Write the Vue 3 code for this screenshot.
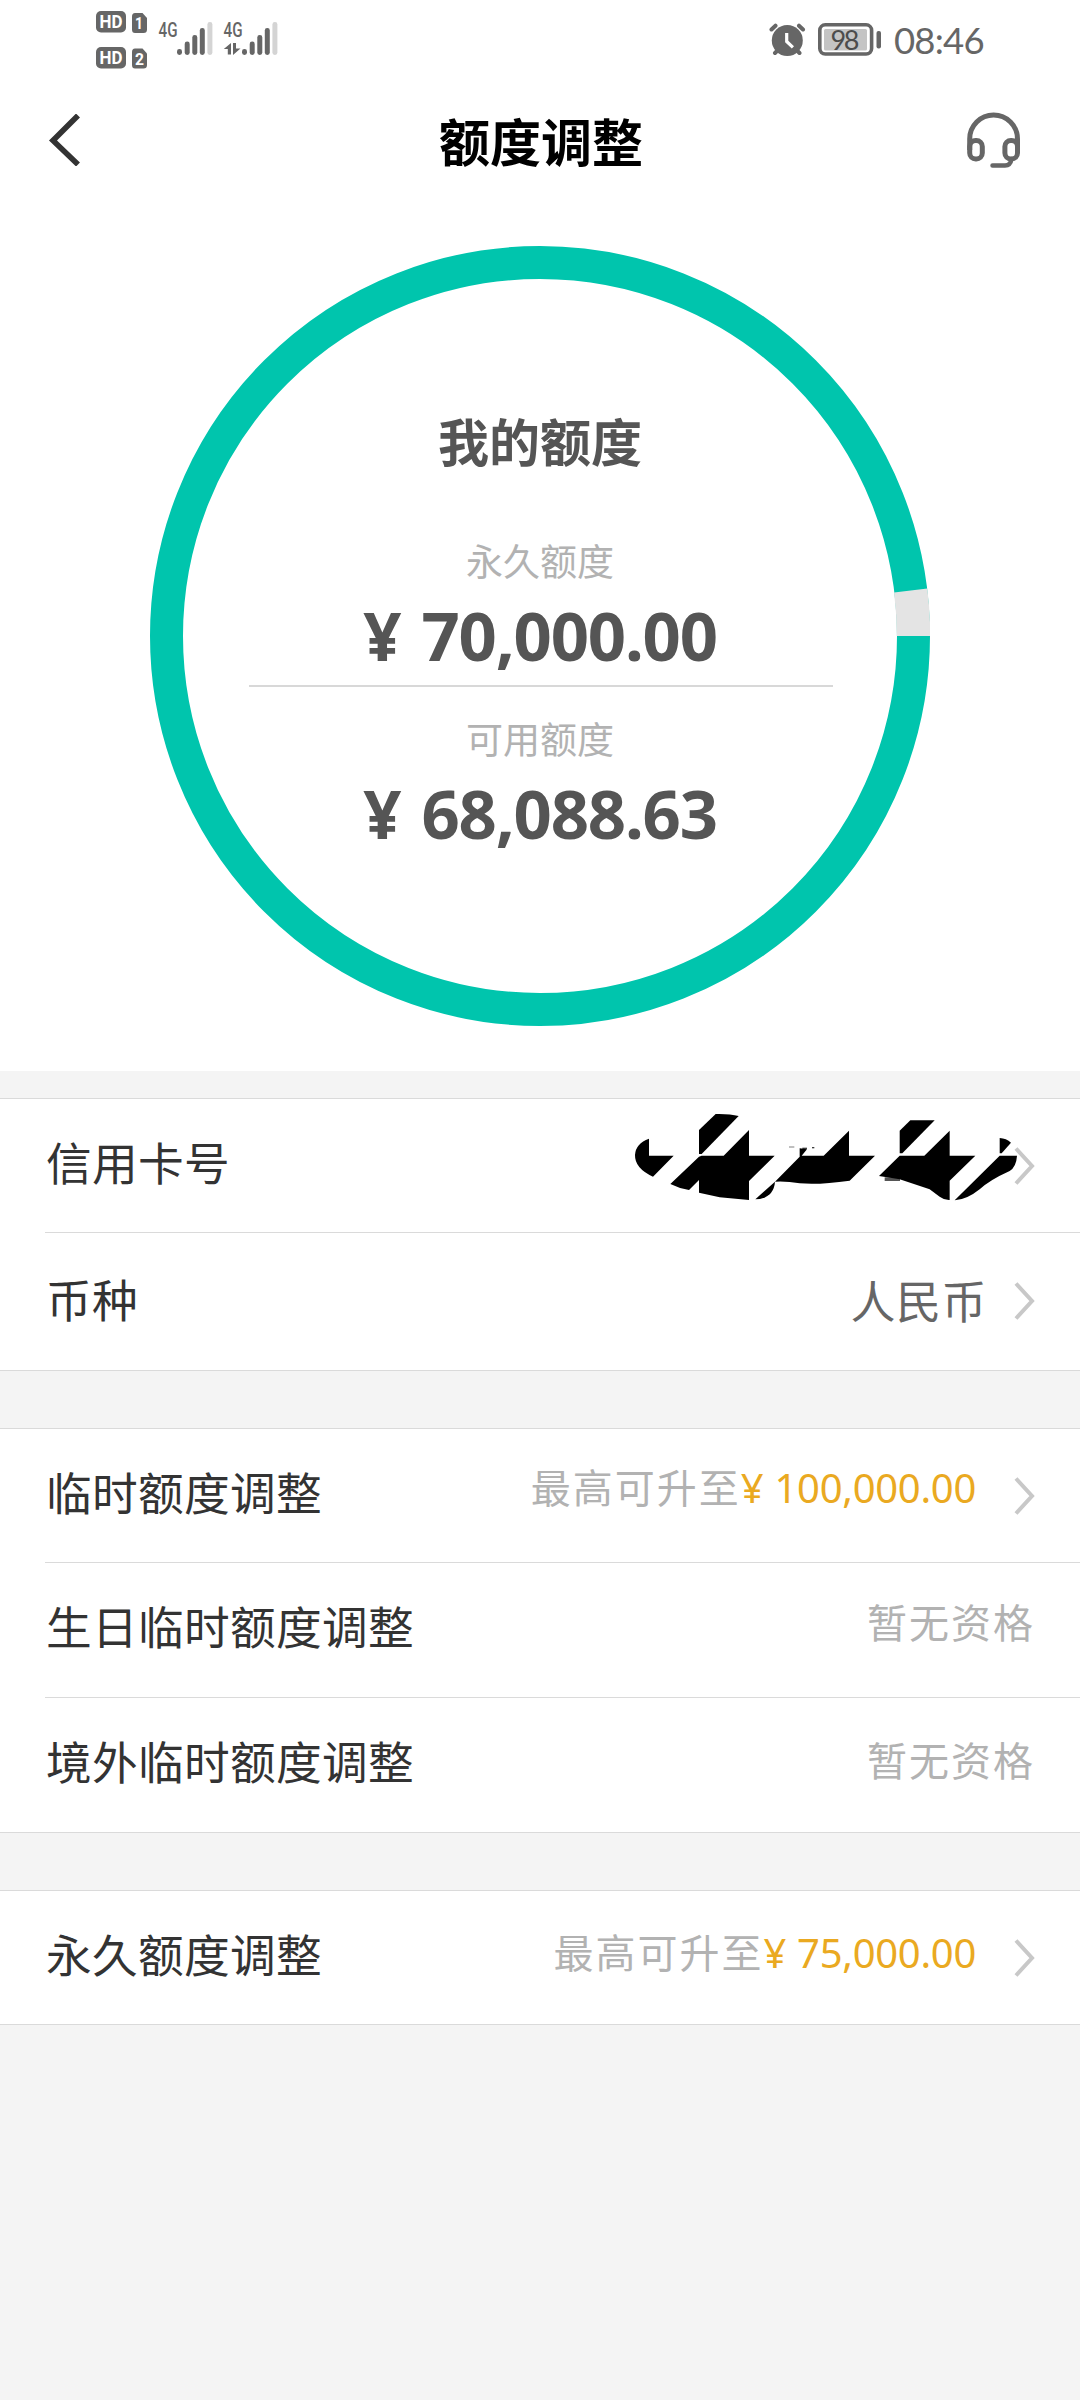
<script setup>
const groups = [
  {
    id: 'card',
    rows: [
      { label: '信用卡号', kind: 'masked', arrow: true },
      { label: '币种', kind: 'plain', value: '人民币', arrow: true },
    ],
  },
  {
    id: 'temporary',
    rows: [
      { label: '临时额度调整', kind: 'limit', value: '最高可升至', amount: '¥ 100,000.00', arrow: true },
      { label: '生日临时额度调整', kind: 'muted', value: '暂无资格' },
      { label: '境外临时额度调整', kind: 'muted', value: '暂无资格' },
    ],
  },
  {
    id: 'permanent',
    rows: [
      { label: '永久额度调整', kind: 'limit', value: '最高可升至', amount: '¥ 75,000.00', arrow: true },
    ],
  },
]

const radius = 373.5
const circumference = 2 * Math.PI * radius
const usedDegrees = 7
const usedLength = (circumference * usedDegrees) / 360
</script>

<template>
  <main class="screen">
    <div class="status">
      <svg class="status-left" width="200" height="80" viewBox="80 0 200 80">
        <g fill="#666">
          <rect x="96" y="11" width="30" height="21.5" rx="5" />
          <rect x="96" y="47" width="30" height="21.5" rx="5" />
          <path d="M135 13h7.5l4.5 5v11.5q0 3.5-3.5 3.5h-8.5q-3 0-3-3.5v-13q0-3.5 3-3.5z" />
          <path d="M135 48.5h7.5l4.5 5v11.5q0 3.5-3.5 3.5h-8.5q-3 0-3-3.5v-13q0-3.500 3-3.5z" />
        </g>
        <g class="badge-text" fill="#fff">
          <text x="99.5" y="28" textLength="23" lengthAdjust="spacingAndGlyphs">HD</text>
          <text x="99.5" y="64" textLength="23" lengthAdjust="spacingAndGlyphs">HD</text>
          <text class="sim" x="135" y="29" textLength="8" lengthAdjust="spacingAndGlyphs">1</text>
          <text class="sim" x="135" y="64.5" textLength="9" lengthAdjust="spacingAndGlyphs">2</text>
        </g>
        <g class="net-text" fill="#666">
          <text x="158.5" y="37" textLength="19" lengthAdjust="spacingAndGlyphs">4G</text>
          <text x="223.5" y="37" textLength="19" lengthAdjust="spacingAndGlyphs">4G</text>
        </g>
        <g v-for="dx in [0, 65]" :key="dx" :transform="`translate(${dx} 0)`" fill="#666">
          <rect x="177" y="49" width="5" height="6" rx="2.4" />
          <rect x="184.7" y="41.5" width="5" height="13.5" rx="2.4" />
          <rect x="192.3" y="35" width="5" height="20" rx="2.4" />
          <rect x="199.8" y="28" width="5" height="27" rx="2.4" />
          <rect x="207.4" y="22" width="5" height="33" rx="2.4" fill="#d4d4d4" />
        </g>
        <path d="M231 43v11.5h-3.2v-5.5h-4zM233 43h3v5.5h4.5l-7.5 6.5z" fill="#666" />
      </svg>
      <div class="status-right">
        <svg width="37" height="36" viewBox="769 22 37 36">
          <path d="M771.5 29.5l4-3.8M803 29.500l-4-3.8M775 53l4-4M799.5 53l-4-4" stroke="#666" stroke-width="4" stroke-linecap="round" fill="none" />
          <circle cx="787.3" cy="40.5" r="15.5" fill="#666" />
          <path d="M786.7 33v8.5l6.2 5.8" fill="none" stroke="#fff" stroke-width="3.2" />
        </svg>
        <svg width="64" height="36" viewBox="818 22 64 36">
          <rect x="819.8" y="24.8" width="51.8" height="29.2" rx="5.5" fill="#fff" stroke="#666" stroke-width="3.6" />
          <rect x="824" y="29" width="43" height="21.5" rx="1.5" fill="#c4c4c4" />
          <rect x="876.5" y="31" width="4.5" height="17.5" rx="2" fill="#666" />
          <text class="battery-text" x="830.5" y="49.5" textLength="29" fill="#4c4c4c">98</text>
        </svg>
        <span class="time">08:46</span>
      </div>
    </div>

    <header class="nav">
      <svg width="34" height="52" viewBox="0 0 34 52">
        <path d="M31 1.5L6 26.5L31 50.5" fill="none" stroke="#333" stroke-width="5.6" />
      </svg>
      <h1>额度调整</h1>
      <svg width="56" height="58" viewBox="965 111 56 58">
        <g fill="none" stroke="#666" stroke-width="5">
          <path d="M969.7 150V139a23.9 23.9 0 0 1 47.8 0v11" />
          <rect x="969.7" y="140.5" width="12.6" height="18.5" rx="6" />
          <rect x="1004.9" y="140.5" width="12.6" height="18.5" rx="6" />
          <path d="M1011.5 159q-1 6.5-6.5 6.5H992.5" stroke-width="4.5" stroke-linecap="round" />
        </g>
      </svg>
    </header>

    <section class="gauge">
      <svg class="ring" width="780" height="780" viewBox="0 0 780 780">
        <circle cx="390" cy="390" :r="radius" fill="none" stroke="#00c5ad" stroke-width="33" />
        <circle
          cx="390" cy="390" :r="radius" fill="none" stroke="#e4e4e4" stroke-width="33.5"
          :stroke-dasharray="`${usedLength} ${circumference - usedLength}`"
          :transform="`rotate(${-usedDegrees} 390 390)`"
        />
      </svg>
      <div class="summary">
        <h2>我的额度</h2>
        <p class="caption">永久额度</p>
        <p class="amount">¥ 70,000.00</p>
        <hr />
        <p class="caption">可用额度</p>
        <p class="amount">¥ 68,088.63</p>
      </div>
    </section>

    <section v-for="group in groups" :key="group.id" class="group" :class="group.id">
      <div v-for="row in group.rows" :key="row.label" class="row">
        <span class="label">{{ row.label }}</span>
        <span v-if="row.value" class="value" :class="row.kind">{{ row.value }}<b v-if="row.amount">{{ row.amount }}</b></span>
        <svg v-if="row.arrow" class="arrow" width="21" height="38" viewBox="0 0 21 38">
          <path d="M2 1.5L18 19L2 36.5" fill="none" stroke="#c8c8c8" stroke-width="4" />
        </svg>
        <svg v-if="row.kind === 'masked'" class="scribble" width="390" height="92" viewBox="40 60 1170 276">
          <path d="M88 146V197H162L100 260Q45 235 46 195Q48 160 88 146Z" />
          <path d="M238 120L288 72Q330 71 357 78L246 192H238Z" />
          <path d="M152 282L238 200L246 197H312L388 120V197H465L388 273V330L300 322L238 308V270L208 300Q180 296 152 282Z" />
          <path d="M407 328L466 275Q462 325 407 328Z" />
          <path d="M466 275L540 200V175L562 178L546 197H612L688 122V197H766L690 272Q600 285 540 280Q500 273 466 275Z" />
          <path d="M508 170h16v2h-16zM548 173h14v3h-14zM577 172h7v3h-7z" />
          <path d="M840 122L872 91H945L848 190H840Z" />
          <path d="M795 262h46v11h-46z" fill="#555" />
          <path d="M778 258L840 197H914L990 122V197H1067L990 272V330Q975 331 960 320L930 298L840 268Z" />
          <path d="M1140 144Q1160 145 1174 158L1146 190H1140Z" />
          <path d="M1005 331L1140 197H1192Q1190 230 1170 243Q1110 270 1080 298Q1040 330 1005 331Z" />
        </svg>
      </div>
    </section>
  </main>
</template>

<style>
body {
  background: #f4f4f4;
}
</style>

<style scoped>
.screen {
  width: 1080px;
  height: 2400px;
  overflow: hidden;
  background: #f4f4f4;
  font-family: "Noto Sans CJK SC", sans-serif;
}

h1, h2, p {
  margin: 0;
}

svg {
  display: block;
  flex: none;
}

.status {
  display: flex;
  justify-content: space-between;
  height: 80px;
  padding: 0 90px 0 80px;
  background: #fff;
}

.status-right {
  display: flex;
  align-items: flex-start;
  width: 221px;
  padding-top: 22px;
}

.status-right svg + svg {
  margin-left: 12px;
}

.badge-text {
  font: 700 18px Roboto, sans-serif;
}

.sim {
  font-size: 17px;
}

.net-text {
  font: 500 20px Roboto, sans-serif;
}

.battery-text {
  font: 400 27px Lato, sans-serif;
}

.time {
  margin-left: 12px;
  color: #666;
  font: 400 36.5px/37px Lato, sans-serif;
  letter-spacing: -0.8px;
}

.nav {
  display: flex;
  align-items: center;
  justify-content: space-between;
  height: 120px;
  padding: 0 59px 0 47px;
  background: #fff;
}

.nav h1 {
  margin-left: 36px;
  color: #000;
  font-size: 51px;
  font-weight: 700;
  line-height: 60px;
}

.gauge {
  display: grid;
  justify-items: center;
  align-items: start;
  height: 871px;
  padding-top: 46px;
  box-sizing: border-box;
  background: #fff;
}

.ring,
.summary {
  grid-area: 1 / 1;
}

.summary {
  display: flex;
  flex-direction: column;
  align-items: center;
  width: 584px;
  padding-top: 164px;
}

.summary h2 {
  margin-bottom: 65px;
  color: #555;
  font-size: 51px;
  font-weight: 700;
  line-height: 60px;
}

.caption {
  margin-bottom: 10px;
  color: #b2b2b2;
  font-size: 37px;
  line-height: 50px;
}

.amount {
  color: #555;
  font: 700 67px/80px "Noto Sans", sans-serif;
  letter-spacing: -1.2px;
  word-spacing: 5px;
}

.summary hr {
  width: 584px;
  height: 2px;
  margin: 10px 0 26px 2px;
  border: 0;
  background: #d8d8d8;
}

.group {
  margin-bottom: 57px;
  border-top: 1px solid #dadada;
  border-bottom: 1px solid #dadada;
  background: #fff;
}

.gauge + .group {
  margin-top: 27px;
}

.row {
  position: relative;
  display: flex;
  align-items: center;
  height: 133px;
  padding: 0 45px 0 46px;
}

.row + .row {
  height: 135px;
}

.card .row + .row {
  height: 138px;
}

.row + .row::before {
  content: "";
  position: absolute;
  top: 0;
  right: 0;
  left: 45px;
  height: 1px;
  background: #dadada;
}

.label {
  flex: 1;
  margin-bottom: 10px;
  color: #333;
  font-size: 45.7px;
  letter-spacing: 0.3px;
  line-height: 60px;
}

.card .row + .row .label {
  margin-bottom: 7px;
}

.value {
  font-size: 40px;
  letter-spacing: 2px;
  line-height: 60px;
  white-space: pre;
}

.plain {
  margin: 0 27px 2px 0;
  color: #666;
  font-size: 45px;
  letter-spacing: 0.5px;
}

.limit {
  margin: 0 38px 18px 0;
  color: #b2b2b2;
}

.permanent .limit {
  margin-bottom: 12px;
}

.limit b {
  color: #eaa921;
  font-family: "Noto Sans", sans-serif;
  font-weight: 400;
  letter-spacing: -0.3px;
  word-spacing: 1px;
}

.muted {
  margin-bottom: 17px;
  color: #b2b2b2;
}

.row:last-child > .muted {
  margin-bottom: 12px;
}

.scribble {
  position: absolute;
  top: 11px;
  right: 57px;
}
</style>
